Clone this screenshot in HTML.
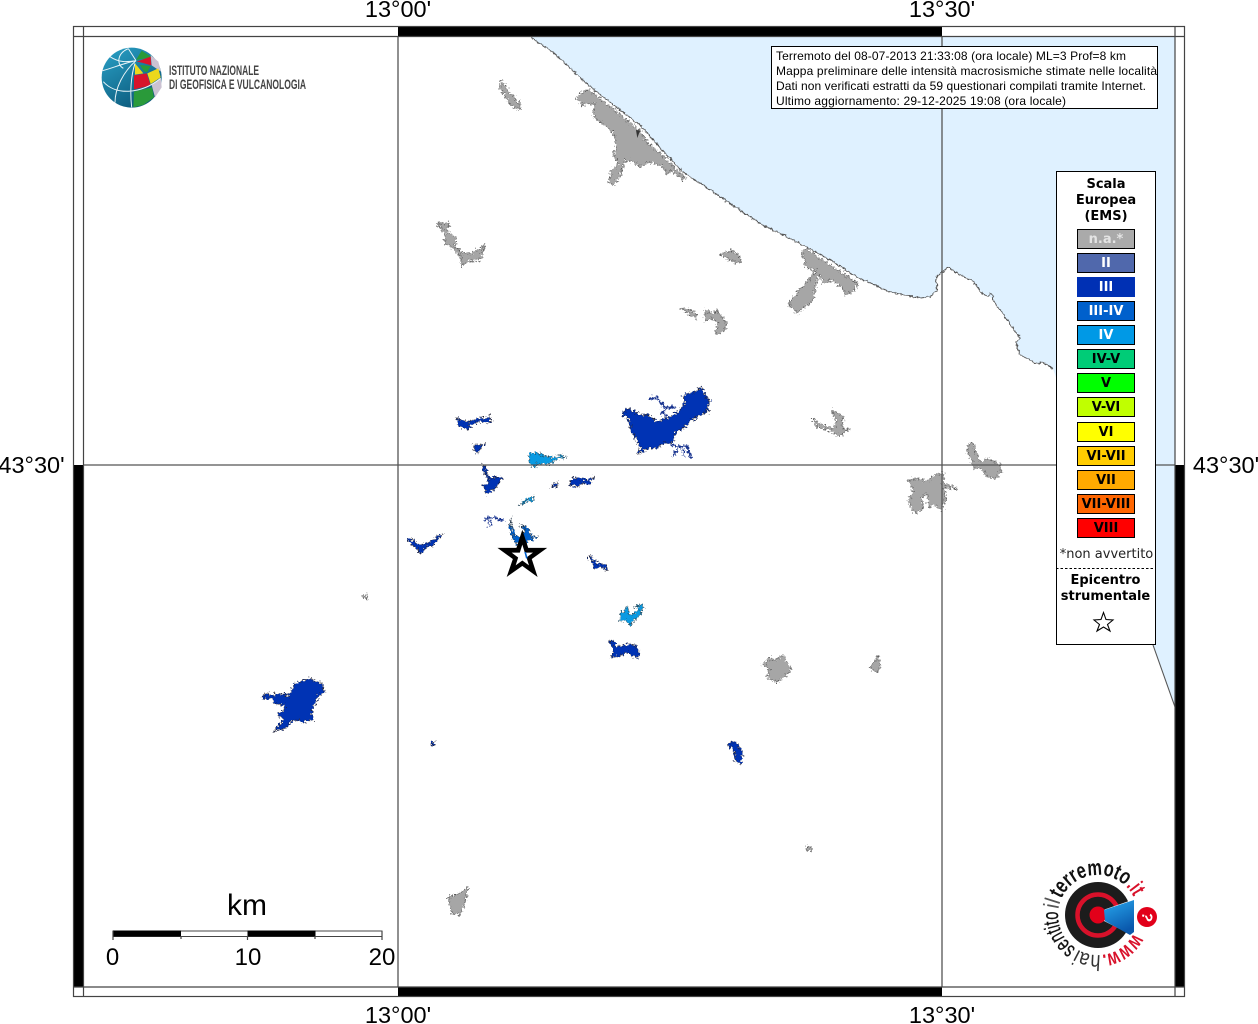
<!DOCTYPE html>
<html><head><meta charset="utf-8"><title>Mappa</title>
<style>
html,body{margin:0;padding:0;background:#fff;width:1258px;height:1024px;overflow:hidden}
svg{display:block}
.ax{font:23.5px "Liberation Sans",sans-serif;fill:#000;text-anchor:middle}
.info{font:12px "Liberation Sans",sans-serif;fill:#000}
.lg{font:bold 13px "DejaVu Sans",sans-serif;text-anchor:middle;fill:#000}
.g polygon,.g path{fill:#a6a6a6;stroke:#555;stroke-width:2;stroke-linejoin:round}
.b polygon,.b path{fill:#0033b4;stroke:#223;stroke-width:2;stroke-linejoin:round}
.c polygon{fill:#0a9ae2;stroke:#245;stroke-width:2;stroke-linejoin:round}
.m polygon,.m path{fill:#0060cc;stroke:#234;stroke-width:2;stroke-linejoin:round}
.g path.l,.b path.l,.m path.l{fill:none}
</style></head><body>
<svg width="1258" height="1024" viewBox="0 0 1258 1024" xmlns="http://www.w3.org/2000/svg">
<defs>
<filter id="j" x="-15%" y="-15%" width="130%" height="130%" color-interpolation-filters="sRGB"><feTurbulence type="fractalNoise" baseFrequency="0.15" numOctaves="2" seed="3"/><feDisplacementMap in="SourceGraphic" scale="24" xChannelSelector="R" yChannelSelector="G"/></filter>
<filter id="k" x="-30%" y="-30%" width="160%" height="160%" color-interpolation-filters="sRGB"><feTurbulence type="fractalNoise" baseFrequency="0.45" numOctaves="2" seed="5"/><feDisplacementMap in="SourceGraphic" scale="8" xChannelSelector="R" yChannelSelector="G"/></filter>
<filter id="c" x="-2%" y="-2%" width="104%" height="104%" color-interpolation-filters="sRGB"><feTurbulence type="fractalNoise" baseFrequency="0.3" numOctaves="2" seed="8"/><feDisplacementMap in="SourceGraphic" scale="4" xChannelSelector="R" yChannelSelector="G"/></filter>
<linearGradient id="gb" x1="0" y1="0" x2="0.6" y2="1"><stop offset="0" stop-color="#2aa2c8"/><stop offset="1" stop-color="#0c5a7c"/></linearGradient>
<linearGradient id="mg" x1="0" y1="0" x2="0.4" y2="1"><stop offset="0" stop-color="#28a8ee"/><stop offset="1" stop-color="#0a58ac"/></linearGradient>
<path id="ring" d="M1133.6 933.2 A40 40 0 1 1 1133.6 896.8"/>
</defs>
<rect width="1258" height="1024" fill="#fff"/>

<!-- sea -->
<path d="M530 36L540 44L553 52L567 65L588 85L607 100L640 125L662 150L683 172L710 190L747 215L763 225L803 245L830 260L857 277L890 292L920 298L930 297L937 290L936 277L943 272L948 267L957 273L973 281L982 293L992 298L1000 310L1013 328L1020 338L1016 343L1020 355L1038 364L1043 362L1053 369L1100 500L1153 645L1175 707L1175 36Z" fill="#dff1ff"/>
<path filter="url(#c)" d="M530 36L540 44L553 52L567 65L588 85L607 100L640 125L662 150L683 172L710 190L747 215L763 225L803 245L830 260L857 277L890 292L920 298L930 297L937 290L936 277L943 272L948 267L957 273L973 281L982 293L988 296L990 293L994 296L992 299L1000 310L1013 328L1020 338L1016 343L1020 355L1038 364L1043 362L1053 369" fill="none" stroke="#555" stroke-width="1.1"/>
<path d="M1153 645L1175 707" fill="none" stroke="#555" stroke-width="1.1"/>

<!-- grey areas -->
<g class="g" transform="translate(530,30) scale(.3333)"><g filter="url(#j)">
<polygon points="140,200 165,182 178,180 255,240 330,303 350,335 405,385 466,442 460,450 425,422 410,435 400,410 360,395 345,405 330,410 310,395 285,390 270,440 250,465 235,460 245,420 265,400 250,375 260,345 250,310 230,290 190,260 195,220 155,225"/>
<polygon points="572,673 605,662 630,680 632,698 605,695"/>
<polygon points="452,835 475,838 500,850 500,865 480,855"/>
<polygon points="525,840 545,850 560,840 575,860 592,880 580,905 555,915 565,880 545,865 525,875"/>
<polygon points="815,665 825,655 900,705 985,760 970,785 945,795 935,770 905,750 880,760 870,735 860,745 850,810 800,850 775,820 835,750 860,720 830,715"/>
</g><path d="M318 300L330 302L322 324Z" style="fill:#333;stroke:none"/></g>
<g class="g" transform="translate(800,260) scale(.3333)"><g filter="url(#j)">
<polygon points="38,475 60,490 95,505 110,490 95,450 130,470 125,505 148,508 118,528 90,512 50,500"/>
<polygon points="510,548 520,550 540,605 565,595 600,615 605,635 585,655 560,650 540,625 520,625 515,600 500,570"/>
<polygon points="322,660 355,655 380,665 400,648 430,640 430,670 472,685 430,685 440,710 425,750 405,735 385,740 380,700 365,715 370,745 345,760 325,725 340,690"/>
</g></g>
<g class="g" transform="translate(430,70) scale(.3333)"><g filter="url(#j)">
<polygon points="212,32 222,40 240,70 270,100 270,118 245,110 230,85 210,55"/>
<polygon points="18,460 60,458 50,480 80,505 75,530 100,550 125,550 150,535 165,525 150,570 115,572 95,590 90,560 65,530 45,520 45,490"/>
</g></g>
<g class="g" transform="translate(750,640) scale(.3333)"><g filter="url(#j)">
<polygon points="36,75 60,52 75,62 100,45 115,75 125,90 100,112 80,128 52,112 58,85"/>
<polygon points="362,78 385,46 392,85 380,96 365,92"/>
</g></g>
<g filter="url(#k)" fill="#a6a6a6" stroke="#555" stroke-width=".7">
<polygon points="363,596 366,594 368,600 364,598"/>
<polygon points="806,847 811,846 812,850 807,851"/>
<polygon points="448,897 460,893 468,887 465,903 460,915 452,913"/>
</g>

<!-- blue areas -->
<g transform="translate(400,380) scale(.3333)"><g filter="url(#j)">
<g class="b">
<polygon points="665,105 680,85 705,95 720,105 745,105 770,125 795,115 830,100 855,70 850,45 885,35 905,20 915,45 930,60 920,90 930,92 900,105 870,125 850,145 830,155 820,185 790,190 770,205 745,205 712,222 722,205 705,170 690,150 690,130 680,110"/>
<path class="l" style="stroke:#1a3590;stroke-width:7" d="M745 58L770 52L785 72L800 85L825 80M800 85L785 98L800 108"/>
<path class="l" style="stroke:#1a3590;stroke-width:7" d="M810 190L830 200L860 198L875 235M835 205L820 230M850 205L850 228"/>
<polygon points="168,110 180,120 205,125 235,115 265,115 268,105 275,128 235,125 215,135 205,147 180,142 172,125"/>
<polygon points="222,195 240,195 253,192 240,208 230,220 224,210"/>
<polygon points="248,254 258,262 262,285 275,295 290,290 307,293 290,320 262,342 250,320 265,310 265,295 252,280"/>
<polygon points="455,320 470,305 473,320"/>
<polygon points="508,316 520,292 540,295 560,300 580,290 568,315 550,310 535,320"/>
<polygon points="22,478 35,478 55,495 85,490 130,458 100,495 75,505 60,522 50,505 30,490"/>
<polygon points="565,525 578,533 590,548 620,555 624,573 600,560 585,565 575,545"/>
<polygon points="625,785 640,782 650,800 680,795 700,793 718,810 718,832 695,830 685,815 660,828 633,832 640,805"/>
<path class="l" style="stroke:#1a3590;stroke-width:6" d="M253 418L285 412L310 423M270 420L268 438"/>
</g>
<g class="c">
<polygon points="388,222 400,217 430,225 460,235 480,225 500,232 465,238 455,250 410,252 405,262 388,250"/>
<polygon points="662,700 675,690 680,680 690,705 705,700 720,680 700,682 730,670 725,700 700,722 690,737 680,722 662,725"/>
<polygon points="362,372 385,352 400,350 398,367 385,360 370,370"/>
</g>
<g class="m">
<polygon points="330,415 335,440 325,430 335,465 345,490 370,490 395,480 415,468 395,470 385,445 360,435 375,450 368,470 345,470"/>
</g>
</g>
<polygon points="367,454 383.5,505 437,505 393.6,536.6 410,587 367,556 323,587 340.4,536.6 297,505 350.5,505" fill="#000" stroke="#000" stroke-width="3"/>
<polygon points="367,494 374.5,518 399,518 379.5,532.5 387,556 367,541.5 347,556 354.5,532.5 335,518 359.5,518" fill="#fff"/>
<polygon points="373,516 378,516 383,535 378,535" fill="#0060cc"/>
</g>
<g class="b" transform="translate(240,660) scale(.3333)"><g filter="url(#j)">
<polygon points="68,118 75,100 95,105 130,100 145,110 165,70 210,55 245,70 250,90 258,90 235,110 220,140 215,160 220,180 190,185 160,180 135,205 103,213 130,180 110,160 130,155 135,135 105,130 95,115"/>
</g></g>
<g filter="url(#k)" fill="#0033b4" stroke="#223" stroke-width=".7">
<polygon points="431,743 434,741 435,745 432,746"/>
<polygon points="727,744 735,741 743,752 741,763 735,762 735,752"/>
</g>

<!-- grid -->
<g stroke="#555" stroke-width="1.3" fill="none">
<path d="M398 36V987M942 36V987M83 465H1175"/>
</g>

<!-- frame -->
<rect x="398" y="26" width="544" height="10" fill="#000"/>
<rect x="398" y="987" width="544" height="10" fill="#000"/>
<rect x="73" y="465" width="10" height="522" fill="#000"/>
<rect x="1175" y="465" width="10" height="522" fill="#000"/>
<g stroke="#444" stroke-width="1.2" fill="none">
<rect x="73.5" y="26.5" width="1111" height="970"/>
<path d="M83.5 26.5V996.5M1175 26.5V996.5M73.5 36.5H1184.5M73.5 987H1184.5"/>
</g>

<!-- axis labels -->
<text class="ax" x="398" y="17">13°00'</text>
<text class="ax" x="942" y="17">13°30'</text>
<text class="ax" x="398" y="1023">13°00'</text>
<text class="ax" x="942" y="1023">13°30'</text>
<text class="ax" x="31.5" y="473">43°30'</text>
<text class="ax" x="1226" y="473">43°30'</text>

<!-- info box -->
<rect x="771.5" y="46.5" width="386" height="62" fill="#fff" stroke="#000" stroke-width="1"/>
<text class="info" x="776" y="60" textLength="350">Terremoto del 08-07-2013 21:33:08 (ora locale) ML=3 Prof=8 km</text>
<text class="info" x="776" y="75" textLength="381">Mappa preliminare delle intensità macrosismiche stimate nelle località</text>
<text class="info" x="776" y="90" textLength="370">Dati non verificati estratti da 59 questionari compilati tramite Internet.</text>
<text class="info" x="776" y="105" textLength="290">Ultimo aggiornamento: 29-12-2025 19:08 (ora locale)</text>

<!-- INGV logo -->
<g transform="translate(60,0) scale(.3333)">
<circle cx="215" cy="233" r="90" fill="url(#gb)"/>
<polygon points="228,180 245,152 270,168 275,172" fill="#2a9a3a"/>
<polygon points="230,185 272,170 274,196 245,188" fill="#d8142c"/>
<polygon points="272,165 295,185 303,215 275,196" fill="#cbc2d2"/>
<polygon points="225,190 250,220 225,224" fill="#ecd81c"/>
<polygon points="240,195 272,198 262,216 252,215" fill="#2a9a3a"/>
<polygon points="262,220 295,205 302,232 272,252" fill="#ecd81c"/>
<polygon points="222,226 260,220 272,256 222,268" fill="#d8142c"/>
<polygon points="275,255 303,235 305,262 285,292" fill="#cbc2d2"/>
<polygon points="222,275 276,262 282,292 250,315 220,322" fill="#2a9a3a"/>
<g fill="none" stroke="#e8f3f7" stroke-width="3">
<path d="M228 182C190 190 155 205 128 212M228 182C190 215 165 265 165 308M225 190C212 230 210 280 215 322M205 146C170 160 170 195 190 205M150 170C180 190 205 185 228 182M130 245C165 285 240 285 302 235M205 146L228 182"/>
</g>
</g>
<g style="font-family:'Liberation Sans',sans-serif" fill="#444" font-weight="bold">
<text x="169" y="75" font-size="13.5" textLength="90" lengthAdjust="spacingAndGlyphs">ISTITUTO NAZIONALE</text>
<text x="169" y="89" font-size="13.5" textLength="137" lengthAdjust="spacingAndGlyphs">DI GEOFISICA E VULCANOLOGIA</text>
</g>

<!-- legend -->
<rect x="1056.5" y="171.5" width="99" height="473" fill="#fff" stroke="#000" stroke-width="1"/>
<text class="lg" x="1106" y="188">Scala</text>
<text class="lg" x="1106" y="204">Europea</text>
<text class="lg" x="1106" y="220">(EMS)</text>
<g stroke="#000" stroke-width="1">
<rect x="1077.5" y="229.5" width="57" height="19" fill="#aaaaaa"/>
<rect x="1077.5" y="253.5" width="57" height="19" fill="#5068ac"/>
<rect x="1077" y="277" width="58" height="20" fill="#0030b4" stroke="none"/>
<rect x="1077.5" y="301.5" width="57" height="19" fill="#0060cc"/>
<rect x="1077.5" y="325.5" width="57" height="19" fill="#0099e6"/>
<rect x="1077.5" y="349.5" width="57" height="19" fill="#00cc77"/>
<rect x="1077.5" y="373.5" width="57" height="19" fill="#00ff00"/>
<rect x="1077.5" y="397.5" width="57" height="19" fill="#c0ff00"/>
<rect x="1077.5" y="422.5" width="57" height="19" fill="#ffff00"/>
<rect x="1077.5" y="446.5" width="57" height="19" fill="#ffcc00"/>
<rect x="1077.5" y="470.5" width="57" height="19" fill="#ffaa00"/>
<rect x="1077.5" y="494.5" width="57" height="19" fill="#ff6600"/>
<rect x="1077.5" y="518.5" width="57" height="19" fill="#ff0000"/>
</g>
<text class="lg" x="1106" y="243" style="fill:#e4e4e4">n.a.*</text>
<text class="lg" x="1106" y="267" style="fill:#fff">II</text>
<text class="lg" x="1106" y="291" style="fill:#fff">III</text>
<text class="lg" x="1106" y="315" style="fill:#fff">III-IV</text>
<text class="lg" x="1106" y="339" style="fill:#fff">IV</text>
<text class="lg" x="1106" y="363">IV-V</text>
<text class="lg" x="1106" y="387">V</text>
<text class="lg" x="1106" y="411">V-VI</text>
<text class="lg" x="1106" y="436">VI</text>
<text class="lg" x="1106" y="460">VI-VII</text>
<text class="lg" x="1106" y="484">VII</text>
<text class="lg" x="1106" y="508">VII-VIII</text>
<text class="lg" x="1106" y="532">VIII</text>
<text class="lg" x="1106.5" y="558" style="font-weight:normal;fill:#222">*non avvertito</text>
<path d="M1056 568.5H1154" stroke="#000" stroke-width="1" stroke-dasharray="2.5 2"/>
<text class="lg" x="1105.5" y="584">Epicentro</text>
<text class="lg" x="1105.5" y="600">strumentale</text>
<polygon points="1103.5,612.5 1106,619.5 1113,620 1107.5,624.5 1110,631 1103.5,627 1097,631 1099.5,624.5 1094,620 1101,619.5" fill="#fff" stroke="#000" stroke-width="1.1"/>

<!-- scale bar -->
<g>
<text x="247" y="915" font-family="Liberation Sans, sans-serif" font-size="30" text-anchor="middle">km</text>
<rect x="113" y="931" width="269" height="5.5" fill="#fff" stroke="#444" stroke-width="1"/>
<rect x="113" y="930.5" width="68" height="6" fill="#000"/>
<rect x="247.5" y="930.5" width="68" height="6" fill="#000"/>
<path d="M113 931V940M181 936V939M247.5 936V940M315 936V939M382 931V940" stroke="#444" stroke-width="1.2" fill="none"/>
<g font-family="Liberation Sans, sans-serif" font-size="24" text-anchor="middle">
<text x="112.5" y="965">0</text><text x="248" y="965">10</text><text x="382" y="965">20</text>
</g>
</g>

<!-- hai sentito logo -->
<g>
<circle cx="1098" cy="915" r="33" fill="#1c1c1c"/>
<circle cx="1098" cy="915" r="20.5" fill="none" stroke="#d8112a" stroke-width="4.5"/>
<path d="M1103 910L1132 900Q1134 900 1134 902V930Q1134 934 1130 934L1104 921Z" fill="#fff"/>
<circle cx="1098" cy="915" r="8.5" fill="#e2001a"/>
<path d="M1104 910L1134 900L1134 932L1130 935L1105 921Z" fill="url(#mg)"/>
<circle cx="1147" cy="917" r="10" fill="#e2001a"/>
<text x="1147" y="922" font-family="Liberation Sans, sans-serif" font-weight="bold" font-size="15" fill="#fff" text-anchor="middle" transform="rotate(105 1147 917)">?</text>
<g font-family="Liberation Sans, sans-serif" font-size="22">
<text fill="#d8112a" font-weight="bold"><textPath href="#ring" startOffset="0" textLength="40" lengthAdjust="spacingAndGlyphs">www.</textPath></text>
<text fill="#333"><textPath href="#ring" startOffset="41" textLength="24" lengthAdjust="spacingAndGlyphs">hai</textPath></text>
<text fill="#111" stroke="#111" stroke-width=".3"><textPath href="#ring" startOffset="67" textLength="43" lengthAdjust="spacingAndGlyphs">sentito</textPath></text>
<text fill="#555"><textPath href="#ring" startOffset="112" textLength="9" lengthAdjust="spacingAndGlyphs">il</textPath></text>
<text fill="#111" font-weight="bold"><textPath href="#ring" startOffset="123" textLength="76" lengthAdjust="spacingAndGlyphs">terremoto</textPath></text>
<text fill="#d8112a" font-weight="bold"><textPath href="#ring" startOffset="200" textLength="13" lengthAdjust="spacingAndGlyphs">.it</textPath></text>
</g>
</g>
</svg>
</body></html>
